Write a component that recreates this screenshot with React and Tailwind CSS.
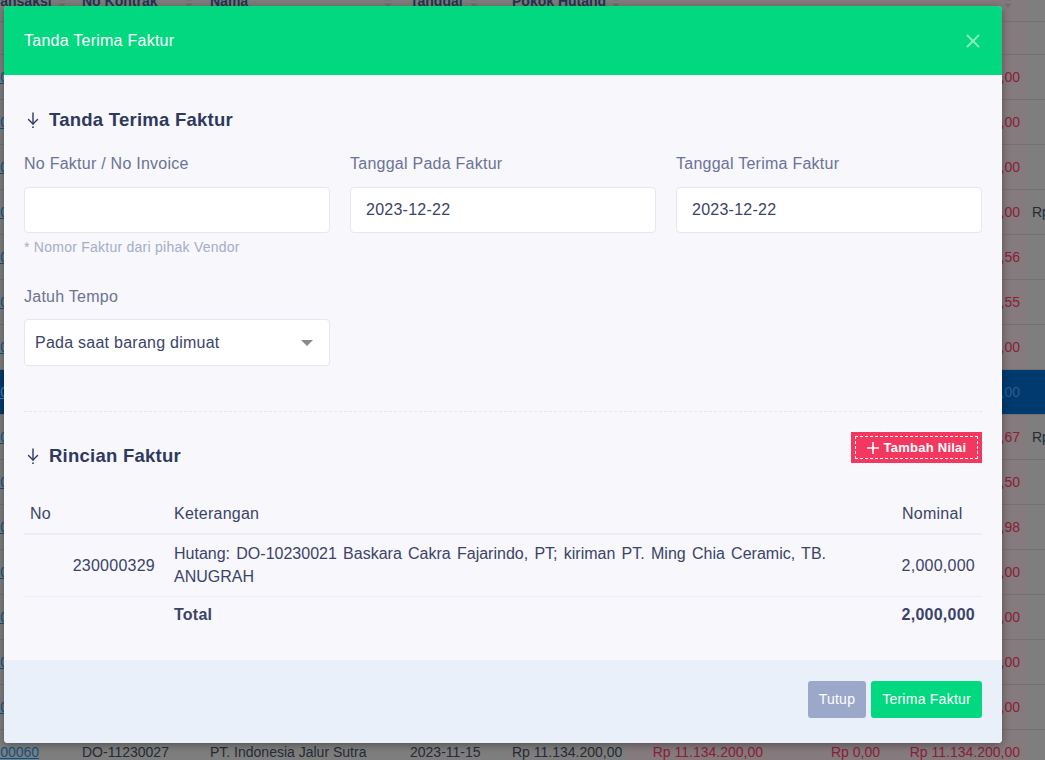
import React from 'react'

// Baris tabel di belakang modal (sudah diredupkan oleh backdrop)
const bgRows = [
  { id: '230000049', no: 'DO-11230016', nama: 'CV. Sinar Abadi', tgl: '2023-11-02', pokok: 'Rp 4.250.000,00', a: 'Rp 4.250.000,00', b: 'Rp 0,00', c: 'Rp 4.250.000,00', d: '' },
  { id: '230000050', no: 'DO-11230017', nama: 'PT. Maju Bersama', tgl: '2023-11-03', pokok: 'Rp 2.000.000,00', a: 'Rp 2.000.000,00', b: 'Rp 0,00', c: 'Rp 2.000.000,00', d: '' },
  { id: '230000051', no: 'DO-11230018', nama: 'TB. Anugrah', tgl: '2023-11-03', pokok: 'Rp 7.800.000,00', a: 'Rp 7.800.000,00', b: 'Rp 0,00', c: 'Rp 7.800.000,00', d: '' },
  { id: '230000052', no: 'DO-11230019', nama: 'PT. Ming Chia Ceramic', tgl: '2023-11-05', pokok: 'Rp 9.100.000,00', a: 'Rp 9.100.000,00', b: 'Rp 0,00', c: 'Rp 9.100.000,00', d: 'Rp 1.000,00' },
  { id: '230000053', no: 'DO-11230020', nama: 'CV. Karya Utama', tgl: '2023-11-06', pokok: 'Rp 3.312.455,56', a: 'Rp 3.312.455,56', b: 'Rp 0,00', c: 'Rp 3.312.455,56', d: '' },
  { id: '230000054', no: 'DO-11230021', nama: 'Baskara Cakra Fajarindo', tgl: '2023-11-07', pokok: 'Rp 1.845.120,55', a: 'Rp 1.845.120,55', b: 'Rp 0,00', c: 'Rp 1.845.120,55', d: '' },
  { id: '230000055', no: 'DO-11230022', nama: 'PT. Sentosa Jaya', tgl: '2023-11-08', pokok: 'Rp 6.000.000,00', a: 'Rp 6.000.000,00', b: 'Rp 0,00', c: 'Rp 6.000.000,00', d: '' },
  { id: '230000056', no: 'DO-11230023', nama: 'CV. Mitra Niaga', tgl: '2023-11-09', pokok: 'Rp 2.000.000,00', a: 'Rp 2.000.000,00', b: 'Rp 0,00', c: 'Rp 2.000.000,00', d: '', selected: true },
  { id: '230000057', no: 'DO-11230024', nama: 'PT. Cahaya Terang', tgl: '2023-11-10', pokok: 'Rp 5.433.333,67', a: 'Rp 5.433.333,67', b: 'Rp 0,00', c: 'Rp 5.433.333,67', d: 'Rp 1.000,00' },
  { id: '230000058', no: 'DO-11230025', nama: 'CV. Bumi Lestari', tgl: '2023-11-12', pokok: 'Rp 1.210.500,50', a: 'Rp 1.210.500,50', b: 'Rp 0,00', c: 'Rp 1.210.500,50', d: '' },
  { id: '230000059', no: 'DO-11230026', nama: 'PT. Sumber Rejeki', tgl: '2023-11-13', pokok: 'Rp 8.760.010,98', a: 'Rp 8.760.010,98', b: 'Rp 0,00', c: 'Rp 8.760.010,98', d: '' },
  { id: '230000060', no: 'DO-11230027', nama: 'PT. Indonesia Jalur Sutra', tgl: '2023-11-15', pokok: 'Rp 11.134.200,00', a: 'Rp 11.134.200,00', b: 'Rp 0,00', c: 'Rp 11.134.200,00', d: '' },
  { id: '230000061', no: 'DO-11230028', nama: 'CV. Sejahtera', tgl: '2023-11-16', pokok: 'Rp 3.000.000,00', a: 'Rp 3.000.000,00', b: 'Rp 0,00', c: 'Rp 3.000.000,00', d: '' },
  { id: '230000062', no: 'DO-11230029', nama: 'PT. Harapan Baru', tgl: '2023-11-17', pokok: 'Rp 4.500.000,00', a: 'Rp 4.500.000,00', b: 'Rp 0,00', c: 'Rp 4.500.000,00', d: '' },
  { id: '230000063', no: 'DO-11230030', nama: 'CV. Tunas Muda', tgl: '2023-11-18', pokok: 'Rp 2.750.000,00', a: 'Rp 2.750.000,00', b: 'Rp 0,00', c: 'Rp 2.750.000,00', d: '' },
  { id: '230000060', no: 'DO-11230027', nama: 'PT. Indonesia Jalur Sutra', tgl: '2023-11-15', pokok: 'Rp 11.134.200,00', a: 'Rp 11.134.200,00', b: 'Rp 0,00', c: 'Rp 11.134.200,00', d: '' },
]

// Ikon panah bawah di judul seksi
const ArrowIcon = () => (
  <svg width="12" height="17" viewBox="0 0 12 17" fill="none" stroke="#2d3a5e" strokeWidth="1.4" strokeLinecap="round" strokeLinejoin="round">
    <path d="M6 1v11" />
    <path d="M1.5 7.5L6 12l4.5-4.5" />
    <circle cx="6" cy="15.2" r="0.9" fill="#2d3a5e" stroke="none" />
  </svg>
)

const SortIcon = () => (
  <svg width="8" height="14" viewBox="0 0 8 14" fill="#6f6f6f">
    <path d="M4 1l3.5 4.5h-7z" />
    <path d="M4 13L0.5 8.5h7z" />
  </svg>
)

// Tabel latar belakang
const BackgroundTable = () => (
  <div className="absolute inset-0 bg-[#7e7e7e] text-[14px] text-[#262b35]">
    {/* Header */}
    <div className="flex h-[40px] -mt-[18px] items-center border-b border-[#727272]">
      <div className="w-[82px] shrink-0 flex items-center"><span className="-ml-[13px] font-bold text-[#1d3550]">Transaksi</span><span className="ml-[6px]"><SortIcon /></span></div>
      <div className="w-[128px] shrink-0 flex items-center gap-[28px] font-bold text-[#1d3550]">No Kontrak <SortIcon /></div>
      <div className="w-[200px] shrink-0 flex items-center font-bold text-[#1d3550]"><span className="w-[174px]">Nama</span><SortIcon /></div>
      <div className="w-[102px] shrink-0 flex items-center gap-[7px] font-bold text-[#1d3550]">Tanggal <SortIcon /></div>
      <div className="w-[115px] shrink-0 flex items-center gap-[6px] font-bold text-[#1d3550] whitespace-nowrap">Pokok Hutang <SortIcon /></div>
      <div className="w-[399px] shrink-0 h-full bg-[#857a7d] flex justify-end items-center pr-[14px]"><SortIcon /></div>
    </div>
    <div className="h-[33px] border-b border-[#727272] flex">
      <div className="ml-[627px] w-[399px] shrink-0 bg-[#857a7d]" />
    </div>
    {bgRows.map((r, i) => (
      <div key={i} className={`flex h-[45px] items-center border-b border-[#727272] ${r.selected ? 'bg-[#003a6f]' : ''}`}>
        <div className="w-[82px] shrink-0 overflow-hidden"><span className={`-ml-[31px] block underline ${r.selected ? 'text-[#3f7fb0]' : 'text-[#0d5286]'}`}>{r.id}</span></div>
        <div className="w-[128px] shrink-0">{r.no}</div>
        <div className="w-[200px] shrink-0 whitespace-nowrap overflow-hidden">{r.nama}</div>
        <div className="w-[102px] shrink-0">{r.tgl}</div>
        <div className="w-[115px] shrink-0 whitespace-nowrap">{r.pokok}</div>
        <div className={`w-[399px] shrink-0 h-full flex items-center ${r.selected ? 'text-[#2a5e8e]' : 'bg-[#857a7d] text-[#8a2038]'}`}>
          <div className="w-[136px] shrink-0 text-right whitespace-nowrap">{r.a}</div>
          <div className="w-[117px] shrink-0 text-right whitespace-nowrap">{r.b}</div>
          <div className="w-[140px] shrink-0 text-right whitespace-nowrap">{r.c}</div>
        </div>
        <div className="pl-[6px] shrink-0 whitespace-nowrap">{r.d}</div>
      </div>
    ))}
  </div>
)

const Field = ({ label, value, hint }) => (
  <div className="flex flex-col">
    <label className="text-[16px] leading-[24px] text-[#6b7396]">{label}</label>
    <div className="mt-[11px] h-[46px] rounded-[4px] border border-[#e2e7f1] bg-white px-[15px] flex items-center text-[16px] text-[#3a4468]">
      {value}
    </div>
    {hint && <p className="mt-[4px] text-[14px] leading-[20px] text-[#a6adc8]">{hint}</p>}
  </div>
)

export default function App() {
  return (
    <div className="relative w-[1045px] h-[760px] overflow-hidden" style={{ fontFamily: '"Liberation Sans", Arial, sans-serif' }}>
      <BackgroundTable />

      {/* Modal */}
      <div className="absolute left-[4px] top-[6px] w-[998px] rounded-[4px] overflow-hidden bg-[#f7f7fc] tracking-[0.25px] shadow-[0_2px_8px_rgba(0,0,0,0.35)]">
        {/* Header */}
        <div className="h-[69px] bg-[#02d87f] px-[20px] flex items-center justify-between">
          <h1 className="text-[16px] text-white">Tanda Terima Faktur</h1>
          <button className="mr-[2px]">
            <svg width="14" height="14" viewBox="0 0 14 14" stroke="#86edc0" strokeWidth="2" strokeLinecap="round">
              <path d="M1.5 1.5l11 11M12.5 1.5l-11 11" />
            </svg>
          </button>
        </div>

        {/* Body */}
        <div className="px-[20px] pt-[32px] pb-[28px]">
          <h2 className="flex items-center gap-[10px] text-[18.5px] leading-[26px] font-bold text-[#2d3a5e]">
            <span className="ml-[3px]"><ArrowIcon /></span>
            Tanda Terima Faktur
          </h2>

          <div className="mt-[19px] grid grid-cols-3 gap-[20px]">
            <Field label="No Faktur / No Invoice" value="" hint="* Nomor Faktur dari pihak Vendor" />
            <Field label="Tanggal Pada Faktur" value="2023-12-22" />
            <Field label="Tanggal Terima Faktur" value="2023-12-22" />
          </div>

          <div className="mt-[28px] w-[306px]">
            <label className="text-[16px] leading-[24px] text-[#6b7396]">Jatuh Tempo</label>
            <div className="mt-[10px] h-[47px] rounded-[4px] border border-[#e2e7f1] bg-white pl-[10px] pr-[16px] flex items-center justify-between text-[16px] text-[#3a4468]">
              <span>Pada saat barang dimuat</span>
              <span className="w-0 h-0 border-l-[6px] border-r-[6px] border-t-[6px] border-l-transparent border-r-transparent border-t-[#8a8a8a]" />
            </div>
          </div>

          <div className="mt-[45px] border-t border-dashed border-[#e4e7f0]" />

          <div className="mt-[20px] flex items-start justify-between">
            <h2 className="mt-[11px] flex items-center gap-[10px] text-[18.5px] leading-[26px] font-bold text-[#2d3a5e]">
              <span className="ml-[3px]"><ArrowIcon /></span>
              Rincian Faktur
            </h2>
            <button className="h-[31px] w-[131px] bg-[#f4375e] p-[4px]">
              <span className="h-full w-full border border-dashed border-white flex items-center justify-center gap-[5px] text-[13px] font-bold text-white">
                <svg width="12" height="12" viewBox="0 0 12 12" stroke="white" strokeWidth="1.6">
                  <path d="M6 0v12M0 6h12" />
                </svg>
                Tambah Nilai
              </span>
            </button>
          </div>

          <table className="mt-[26px] w-full border-collapse text-[16px] text-[#3a4468]">
            <thead>
              <tr className="border-b-2 border-[#e9edf5]">
                <th className="w-[144px] pl-[6px] py-[7px] text-left font-normal leading-[24px]">No</th>
                <th className="pl-[6px] py-[7px] text-left font-normal leading-[24px]">Keterangan</th>
                <th className="w-[86px] pl-[6px] py-[7px] text-left font-normal leading-[24px]">Nominal</th>
              </tr>
            </thead>
            <tbody className="leading-[23px]">
              <tr className="border-b border-[#e9edf5]">
                <td className="pr-[13px] text-right align-middle">230000329</td>
                <td className="pl-[6px] pr-[70px] pt-[7px] pb-[8px] text-justify tracking-normal">
                  Hutang: DO-10230021 Baskara Cakra Fajarindo, PT; kiriman PT. Ming Chia Ceramic, TB. ANUGRAH
                </td>
                <td className="pr-[7px] text-right align-middle">2,000,000</td>
              </tr>
              <tr>
                <td />
                <td className="pl-[6px] pt-[6px] pb-[5px] leading-[24px] font-bold">Total</td>
                <td className="pr-[7px] pt-[6px] pb-[5px] leading-[24px] text-right font-bold">2,000,000</td>
              </tr>
            </tbody>
          </table>
        </div>

        {/* Footer */}
        <div className="h-[83px] bg-[#e9f0f9] px-[20px] pt-[21px] flex justify-end items-start gap-[5px]">
          <button className="h-[37px] px-[11px] rounded-[3px] bg-[#9ca8c9] text-[14px] text-white">Tutup</button>
          <button className="h-[37px] px-[11px] rounded-[3px] bg-[#02d87f] text-[14px] text-white">Terima Faktur</button>
        </div>
      </div>
    </div>
  )
}
